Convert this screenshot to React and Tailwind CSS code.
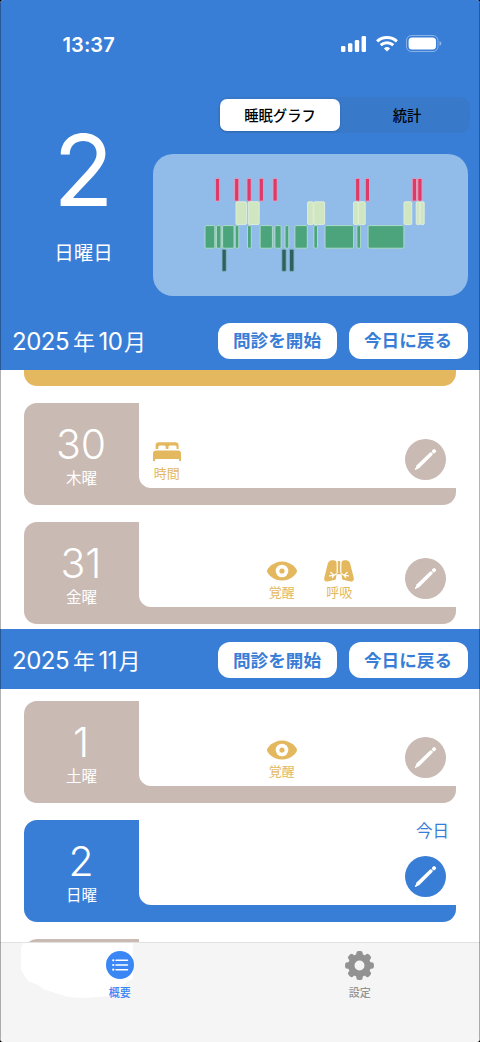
import React, { useState } from 'react';

const MONTHS = [
  {
    id: '10',
    month: '10',
    days: [
      { date: 30, label: '木曜', alerts: ['time', null, null, null] },
      { date: 31, label: '金曜', alerts: [null, null, 'wake', 'breath'] },
    ],
  },
  {
    id: '11',
    month: '11',
    days: [
      { date: 1, label: '土曜', alerts: [null, null, 'wake', null] },
      { date: 2, label: '日曜', alerts: [], today: true },
    ],
  },
];

// [x, width] of each block, per sleep stage
const STAGES = [
  {
    name: 'awake', y: 24, h: 23.5, fill: '#dc3a68', stroke: '#e9a0bd',
    bars: [[62.4, 4.2], [81.6, 4.2], [94, 4.2], [106.2, 4.2], [120, 4.2], [202.6, 4.2], [212.3, 4.2], [259.3, 4.2], [264.8, 4.2]],
  },
  {
    name: 'rem', y: 47.4, h: 23.6, fill: '#cfe6c0', stroke: '#e3f0dc',
    bars: [[83, 10.4], [95.2, 11], [154.6, 5.6], [160.8, 10.8], [200.6, 4.6], [205.4, 6.8], [251, 7.8], [263.2, 3.8], [267.2, 4]],
  },
  {
    name: 'light', y: 71.2, h: 23.4, fill: '#4ca47c', stroke: '#b4e0cb',
    bars: [[52, 9.8], [63.4, 4.6], [69.6, 11.4], [82.2, 3.6], [94.5, 3.8], [107.1, 12.3], [121.9, 6.2], [132, 3.8], [141.9, 12.4], [160.9, 3.6], [172, 28.6], [203.9, 3.7], [215.1, 35.8]],
  },
  {
    name: 'deep', y: 94.8, h: 23, fill: '#2c615f', stroke: '#86b5c4',
    bars: [[69, 4.3], [128.8, 4.4], [136.4, 4.6]],
  },
];

const BedIcon = () => (
  <svg width="28" height="20" viewBox="0 0 28 20" fill="currentColor">
    <path d="M2.6 7V3.6Q2.6 .3 5.9 .3H22.3Q25.6 .3 25.6 3.6V7H23.6V5.2Q23.6 3.6 22 3.6H17Q15.4 3.6 15.4 5.2V7H12.8V5.2Q12.8 3.6 11.2 3.6H6.9Q5.3 3.6 5.3 5.2V7Z" />
    <path d="M0 18.3V11.6Q0 8.4 3.2 8.4H24.8Q28 8.4 28 11.6V18.3Q28 19.2 27 19.2T26 18.3V17H2.2V18.3Q2.2 19.2 1.1 19.2T0 18.3Z" />
  </svg>
);

const EyeIcon = () => (
  <svg width="30" height="20" viewBox="0 0 30 20" fill="currentColor">
    <path d="M15 .4C6 .4 0 7.500 0 10S6 19.600 15 19.600 30 12.500 30 10 24 .4 15 .4Z" />
    <circle cx="15" cy="10" r="6.300" fill="#fff" />
    <circle cx="15" cy="10" r="2.600" />
  </svg>
);

const LungsIcon = () => (
  <svg width="30" height="22" viewBox="0 0 30 22" fill="currentColor">
    <path d="M8 .2H9.500Q12.600 .2 12.600 3.500V14L12 18.500Q11.600 20 10 20.100L3.500 21.500Q-.3 22 .2 18L3.800 3.800Q4.800 .2 8 .2Z" />
    <path d="M22 .2H20.500Q17.400 .2 17.400 3.500V14L18 18.500Q18.400 20 20 20.100L26.500 21.500Q30.300 22 29.800 18L26.200 3.800Q25.200 .2 22 .2Z" />
    <path d="M13.800 1H16.200V12.500L17.600 14.200H12.400L13.800 12.500Z" />
    <path
      d="M12.600 13.800L9.800 15.300L5.500 15.900M9.800 15.200L6.600 12.300M9.800 15.300L8.400 17.600M17.400 13.800L20.200 15.300L24.500 15.900M20.200 15.200L23.400 12.300M20.200 15.300L21.600 17.600"
      fill="none" stroke="#fff" strokeWidth="1.200" strokeLinecap="round"
    />
    <path d="M12.800 15.500L15 14.600L17.200 15.500V22H12.800Z" fill="#fff" />
  </svg>
);

const PencilIcon = () => (
  <svg width="41" height="41" viewBox="0 0 41 41" fill="#fff">
    <path d="M10.200 30.700L11.500 26.600L25.300 13.200Q26.200 13 27.100 13.800T27.600 15.700L14.100 29.300Z" />
    <path d="M10.600 30.300L12.700 28" stroke="#fff" strokeWidth="1.300" strokeLinecap="round" />
    <rect x="27" y="10.400" width="4" height="3.700" rx="1.400" transform="rotate(-45 29 12.200)" />
  </svg>
);

const ALERTS = {
  time: { label: '時間', Icon: BedIcon },
  wake: { label: '覚醒', Icon: EyeIcon },
  breath: { label: '呼吸', Icon: LungsIcon },
};

const StatusBar = () => (
  <div className="h-[88px] shrink-0 flex items-center justify-between pl-[62.5px] pr-[38px]">
    <span className="text-[20px] leading-6 pt-px font-semibold tracking-[0.1px]">13:37</span>
    <div className="flex items-center gap-[8.500px] -mt-px">
      <svg width="26" height="16" viewBox="0 0 26 16" fill="#fff">
        <rect x="0" y="10" width="4.400" height="6" rx="1.300" />
        <rect x="7" y="7.200" width="4.400" height="8.800" rx="1.300" />
        <rect x="13.800" y="3.900" width="4.400" height="12.100" rx="1.300" />
        <rect x="20.600" y="0" width="4.400" height="16" rx="1.300" />
      </svg>
      <svg width="22" height="16" viewBox="0 0 22 16" fill="none" stroke="#fff" strokeWidth="3">
        <path d="M1.100 5.400Q5.300 1.600 11 1.600T20.900 5.400" />
        <path d="M4.700 9.200Q7.500 6.800 11 6.800T17.300 9.200" />
        <path d="M7.900 12.400Q9.400 11 11 11T14.100 12.400L11 15.600Z" fill="#fff" stroke="none" />
      </svg>
      <svg width="36" height="17" viewBox="0 0 36 17">
        <rect x=".5" y=".5" width="31.500" height="16" rx="5" fill="none" stroke="#fff" strokeOpacity=".4" />
        <rect x="2.600" y="2.600" width="27.400" height="11.800" rx="3.500" fill="#fff" />
        <path d="M33.500 6Q35.300 6.800 35.300 8.500T33.500 11Z" fill="#fff" fillOpacity=".45" />
      </svg>
    </div>
  </div>
);

const SleepChart = () => (
  <div className="w-[315px] h-[142px] rounded-[20px] bg-[#91bbe9]">
    <svg width="315" height="142" viewBox="0 0 315 142">
      {STAGES.map((stage) =>
        stage.bars.map(([x, w]) => (
          <rect
            key={`${stage.name}-${x}`}
            x={x} y={stage.y + 0.4} width={w} height={stage.h - 0.8} rx="1.200"
            fill={stage.fill} stroke={stage.stroke} strokeWidth="0.9"
          />
        ))
      )}
    </svg>
  </div>
);

const MonthHeader = ({ month }) => (
  <div className="h-[60px] shrink-0 flex items-center justify-between pl-3 pr-[12.5px] pt-[2px] bg-[#397ed6] text-white">
    <h2 className="flex items-center pt-0.5 text-[24px] leading-8 whitespace-nowrap tracking-[-0.5px]">
      <span>2025</span>
      <span className="text-[22px] ml-[4px]">年</span>
      <span className="ml-[4px]">{month}</span>
      <span className="text-[22px] ml-[1.500px]">月</span>
    </h2>
    <div className="flex gap-3">
      <button className="w-[119px] h-[36px] pt-[2px] rounded-[12px] bg-white text-[#397ed6] text-[17.600px] font-bold">問診を開始</button>
      <button className="w-[119px] h-[36px] pt-[2px] rounded-[12px] bg-white text-[#397ed6] text-[17.600px] font-bold">今日に戻る</button>
    </div>
  </div>
);

const DayCard = ({ day }) => (
  <div className={`h-[102px] shrink-0 mx-6 flex rounded-[13px] rounded-tr-none ${day.today ? 'bg-[#397ed6]' : 'bg-[#c9bab3]'}`}>
    <div className="w-[115px] flex flex-col items-center pt-[20px] pr-px text-white">
      <span className="text-[41px] leading-[42px] font-[330]">{day.date}</span>
      <span className="text-[15.500px] leading-5 mt-1 pl-px">{day.label}</span>
    </div>
    <div className="flex-1 h-[85px] flex justify-between bg-white rounded-bl-[12px]">
      <div className="w-[230px] grid grid-cols-4 -ml-px pt-[37px] text-[#e4b85e]">
        {day.alerts.map((key, i) => {
          if (!key) return <div key={i} />;
          const { label, Icon } = ALERTS[key];
          return (
            <div key={key} className="flex flex-col items-center">
              <div className="h-[23px] flex items-center justify-center"><Icon /></div>
              <span className="text-[13px] leading-4 mt-[2px]">{label}</span>
            </div>
          );
        })}
      </div>
      <div className="flex flex-col items-end justify-end pb-[8px] pr-[10px]">
        {day.today && <span className="text-[16.500px] leading-5 mb-[15px] mr-[-3px] text-[#397ed6]">今日</span>}
        <button className={`size-[41px] rounded-full ${day.today ? 'bg-[#397ed6]' : 'bg-[#c9bab3]'}`}>
          <PencilIcon />
        </button>
      </div>
    </div>
  </div>
);

const TabBar = () => (
  <nav className="relative h-[100px] shrink-0 flex bg-[#f5f5f5] border-t border-[#e2e2e2]">
    <svg className="absolute left-0 top-0" width="140" height="60" viewBox="0 0 140 60" fill="#fff">
      <path d="M23 0H133V36L125 40Q122 50 110 53L84 55L68 54L43 46L38 42L28 38L21 27V5Z" />
    </svg>
    <div className="relative flex-1 flex flex-col items-center pt-2 text-[#3a86f5]">
      <svg width="28" height="28" viewBox="0 0 28 28">
        <circle cx="14" cy="14" r="14" fill="currentColor" />
        <path d="M10 9.300H21.500M10 14H21.500M10 18.700H21.500" stroke="#fff" strokeWidth="1.500" strokeLinecap="round" />
        <path d="M7.200 9.300H7.300M7.200 14H7.300M7.200 18.700H7.300" stroke="#fff" strokeWidth="2.200" strokeLinecap="round" />
      </svg>
      <span className="text-[11px] leading-4 mt-[6px] font-medium">概要</span>
    </div>
    <div className="relative flex-1 flex flex-col items-center pt-2 pr-px text-[#929292]">
      <svg width="29" height="29" viewBox="-14.5 -14.5 29 29">
        <circle r="8.200" fill="none" stroke="currentColor" strokeWidth="6.400" />
        {[0, 45, 90, 135, 180, 225, 270, 315].map((deg) => (
          <rect key={deg} transform={`rotate(${deg})`} fill="currentColor" x="-3.200" y="-14.400" width="6.400" height="7" rx="2.200" />
        ))}
      </svg>
      <span className="text-[11px] leading-4 mt-[5px] pl-px font-medium">設定</span>
    </div>
  </nav>
);

const App = () => {
  const [tab, setTab] = useState('graph');

  return (
    <div className="bg-black w-[480px]">
      <div className="relative w-[480px] h-[1042px] flex flex-col overflow-hidden rounded-[4px] bg-white text-white font-[Inter,'Noto_Sans_CJK_JP',sans-serif]">
        <header className="h-[309.500px] shrink-0 flex flex-col bg-[#397ed6]">
          <StatusBar />
          <div className="flex justify-between pl-[54px] pr-[12px]">
            <div className="w-[59px] flex flex-col items-center pt-[32px]">
              <span className="text-[99px] leading-[100px] font-normal">2</span>
              <span className="text-[19.500px] leading-7 mt-[19px] whitespace-nowrap">日曜日</span>
            </div>
            <div className="flex flex-col items-end pt-[9px]">
              <div className="w-[252px] h-[36px] mr-[-2px] p-[2px] flex rounded-[10px] bg-[#3879ca] text-black text-[14.300px] font-medium">
                <button
                  onClick={() => setTab('graph')}
                  className={`w-[120px] h-[32px] pt-px rounded-[7px] ${tab === 'graph' ? 'bg-white shadow-sm' : ''}`}
                >
                  睡眠グラフ
                </button>
                <button
                  onClick={() => setTab('stats')}
                  className={`flex-1 h-[32px] pt-px pl-1.5 rounded-[7px] ${tab === 'stats' ? 'bg-white shadow-sm' : ''}`}
                >
                  統計
                </button>
              </div>
              <div className="mt-[20.500px]"><SleepChart /></div>
            </div>
          </div>
        </header>

        <main className="flex-1 min-h-0 flex flex-col overflow-hidden">
          {MONTHS.map((m, i) => (
            <React.Fragment key={m.id}>
              <MonthHeader month={m.month} />
              {i === 0 && <div className="h-[16.500px] shrink-0 mx-6 mb-[17px] rounded-b-[13px] bg-[#e4b85e]" />}
              <div className={`shrink-0 flex flex-col gap-[17px] ${i === 0 ? 'mb-[5px]' : 'pt-3'}`}>
                {m.days.map((day) => <DayCard key={day.date} day={day} />)}
              </div>
            </React.Fragment>
          ))}
          <div className="w-[115px] h-[102px] shrink-0 ml-6 mt-[17px] rounded-l-[13px] bg-[#c9bab3]" />
        </main>

        <TabBar />
        <div className="absolute inset-0 border-x border-black/30 pointer-events-none" />
      </div>
    </div>
  );
};

export default App;
